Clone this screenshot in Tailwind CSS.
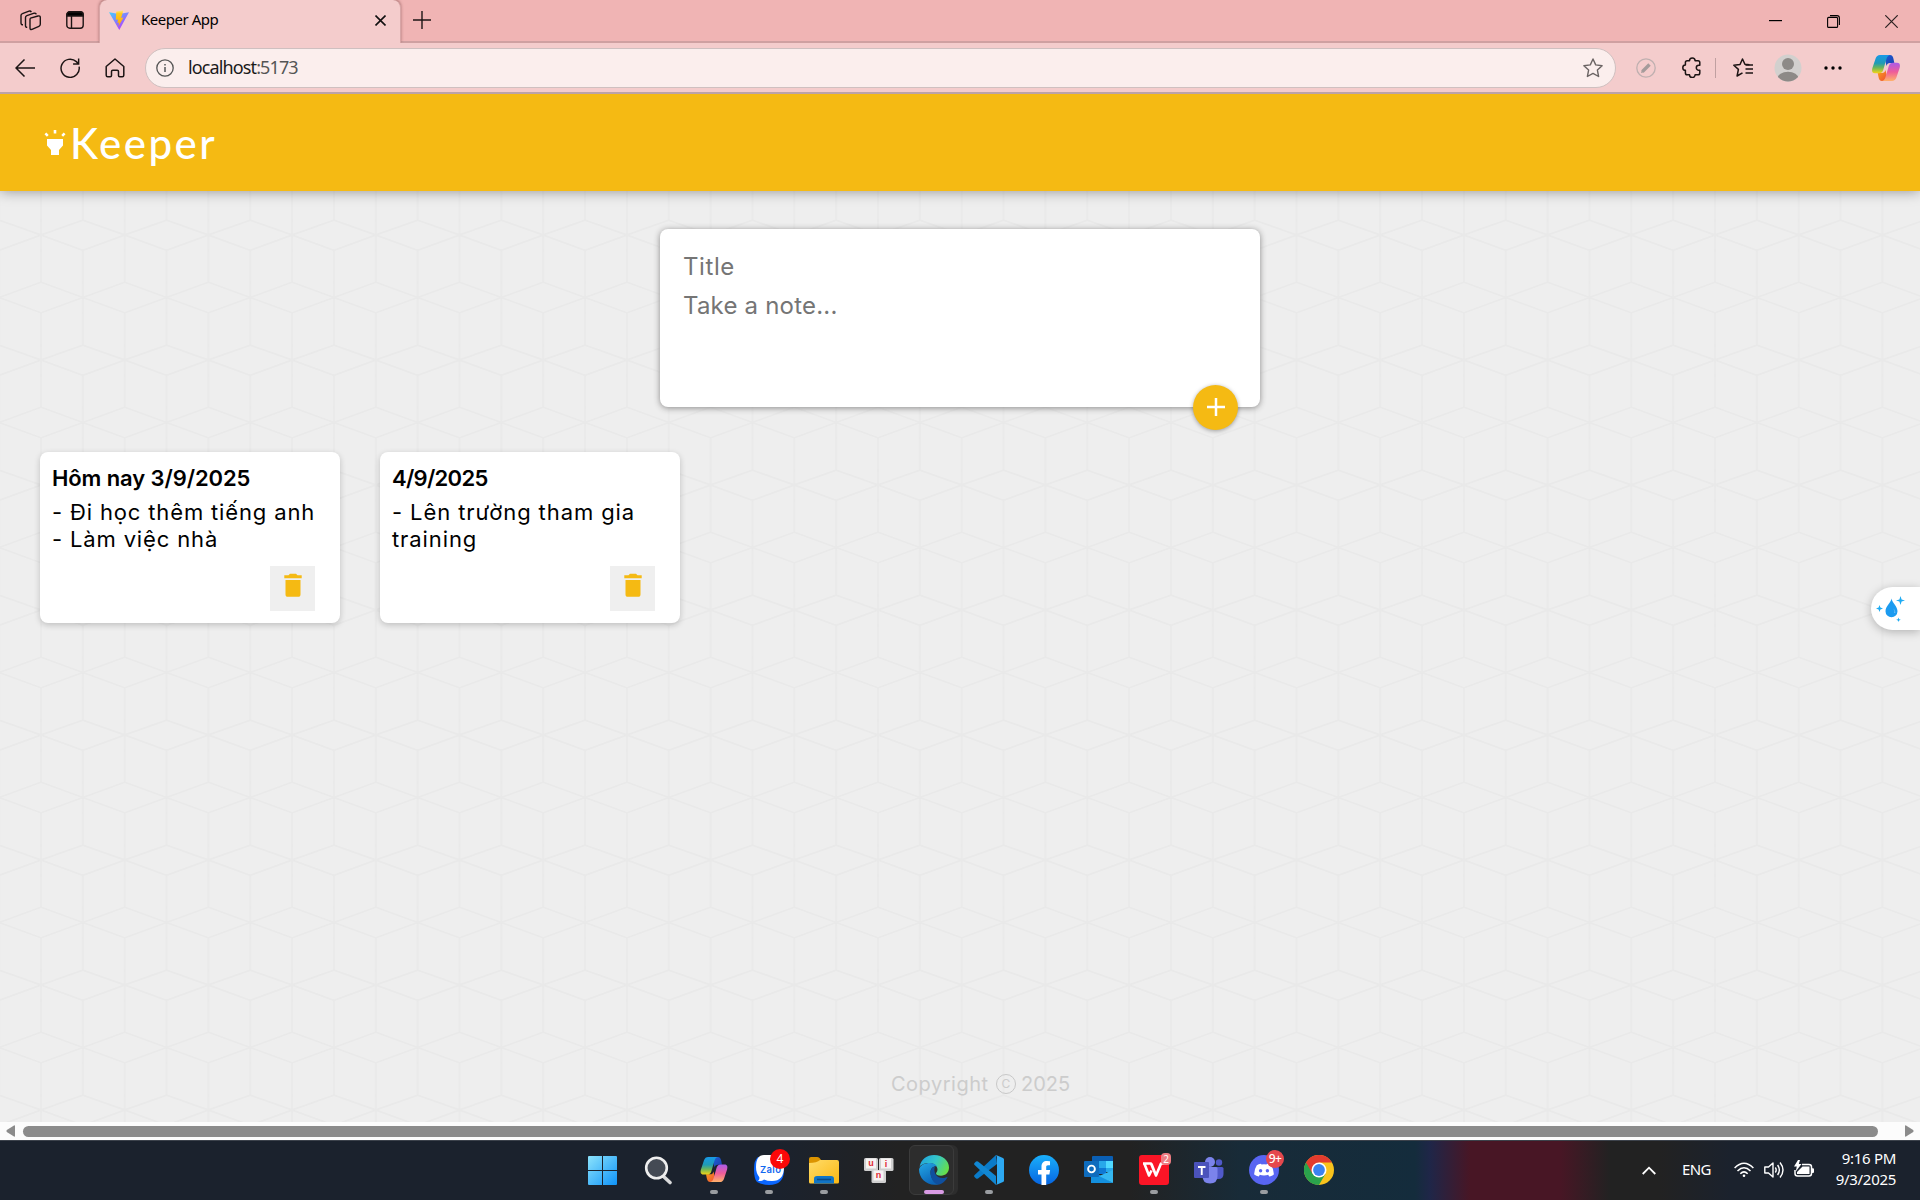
<!DOCTYPE html>
<html lang="en">
<head>
<meta charset="utf-8">
<title>Keeper App</title>
<script src="https://cdn.jsdelivr.net/npm/@tailwindcss/browser@4"></script>
</head>
<body class="w-[1920px] h-[1200px] overflow-hidden flex flex-col font-['Noto_Sans',sans-serif] text-black">

<svg width="0" height="0" class="absolute">
  <defs>
    <linearGradient id="cpA" x1="0" y1="0" x2="0" y2="1"><stop offset="0" stop-color="#1899e8"/><stop offset=".45" stop-color="#1f9bb5"/><stop offset=".7" stop-color="#6cb65a"/><stop offset="1" stop-color="#f3d416"/></linearGradient>
    <linearGradient id="cpB" x1="0" y1="0" x2="0" y2="1"><stop offset="0" stop-color="#ab5be8"/><stop offset=".5" stop-color="#ef5c9a"/><stop offset="1" stop-color="#ffb26a"/></linearGradient>
    <linearGradient id="cpC" x1="0" y1="0" x2="1" y2="1"><stop offset="0" stop-color="#1d5fd6"/><stop offset="1" stop-color="#1b3fae"/></linearGradient>
    <linearGradient id="cpD" x1="0" y1="0" x2="1" y2="1"><stop offset="0" stop-color="#f9a11b"/><stop offset="1" stop-color="#ee4a35"/></linearGradient>
    <symbol id="copilot" viewBox="0 0 28 26">
      <path fill="url(#cpC)" d="M12 0h6c2 0 3 1.500 3.500 4l.8 4H18c-2 0-3 1-3.500 3z"/>
      <path fill="url(#cpD)" d="M16 26h-6c-2 0-3-1.500-3.500-4l-.8-4H10c2 0 3-1 3.500-3z"/>
      <path fill="url(#cpA)" d="M8 0h10c-2 .3-3 2-3.700 4.500L11.200 15c-.8 2.300-2 3.200-4.200 3.200H3c-3 0-3.400-2.500-2.600-5.200L3.600 3.500C4.400 1.200 5.800 0 8 0z"/>
      <path fill="url(#cpB)" d="M20 26H10c2-.3 3-2 3.700-4.500L16.800 11c.8-2.300 2-3.200 4.200-3.200h4c3 0 3.400 2.500 2.600 5.200l-3.200 9.500c-.8 2.300-2.200 3.500-4.400 3.500z"/>
    </symbol>
    <symbol id="trash" viewBox="0 0 18 24"><path fill="#f5ba13" d="M1.500 7h15v14.500c0 1.400-.9 2.300-2.200 2.300H3.700c-1.300 0-2.200-.9-2.200-2.300zM.3 2.200h4.200L6 .7h6l1.500 1.500h4.200v3H.3z"/></symbol>
  </defs>
</svg>

<!-- Tab strip -->
<div class="h-[43px] shrink-0 flex bg-[#f0b4b4] border-b-2 border-[#cfa0a1]">
  <div class="w-[99px] h-[43px] pt-[10px] pl-5 flex items-start gap-[25px]">
    <svg width="21" height="21" viewBox="0 0 21 21" fill="none" stroke="#1c1414" stroke-width="1.400" stroke-linejoin="round"><path d="M10.500 8.200 18 6q2.300-.5 2.300 1.500v6.800q0 1.400-1.400 2L12 19.400q-2 .6-2-1.400V9.800q0-1.200.5-1.600z"/><path d="M7.200 17.300q-1.700.2-1.700-1.600V7.500q0-1.300 1.400-1.800l7.300-2.500q1.600-.4 2 1.200"/><path d="M3 14.800q-2 0-2-1.700V5.500q0-1.400 1.400-1.800L9 1.200q1.600-.5 2.300.9"/></svg>
    <svg class="mt-[1px]" width="18" height="18" viewBox="0 0 18 18" fill="none" stroke="#1c1414" stroke-width="1.400"><rect x=".8" y=".8" width="16.400" height="16.400" rx="3"/><path d="M5.500 5v12"/><path d="M1 5V3.500Q1 1 3.500 1h11Q17 1 17 3.500V5z" fill="#000"/></svg>
  </div>
  <div class="w-[302px] h-[43px] bg-[#f4cccc] rounded-t-lg flex items-start pl-[9px] border-x border-[#d8a5a6] shadow-[0_-1px_3px_rgba(90,40,40,0.5)] [clip-path:inset(0_-4px_0_-4px)]">
    <svg class="mt-[10px]" width="20" height="20" viewBox="0 0 20 20"><defs><linearGradient id="v1" x1="0" y1="0" x2=".7" y2="1"><stop offset="0" stop-color="#41d1ff"/><stop offset="1" stop-color="#bd34fe"/></linearGradient><linearGradient id="v2" x1="0" y1="0" x2="0" y2="1"><stop offset="0" stop-color="#ffea83"/><stop offset=".2" stop-color="#ffcb20"/><stop offset="1" stop-color="#ffa800"/></linearGradient></defs><path fill="url(#v1)" d="M0 2.200 10 4l10-1.800L10.300 20z"/><path fill="url(#v2)" d="m14.300.2-7 1.400-.5 8.200 2.300-.3-.7 3.500 1.800-.5-1 4.200 5.300-9.200-2.400.4 1.400-4.500z"/></svg>
    <span class="ml-[12px] mt-[8px] text-[15px] leading-[22px] tracking-[-0.480px] whitespace-nowrap w-[150px]">Keeper App</span>
    <svg class="ml-[84px] mt-[15px]" width="11" height="11" viewBox="0 0 11 11" stroke="#111" stroke-width="1.600"><path d="m.5.5 10 10m0-10-10 10"/></svg>
  </div>
  <svg class="ml-[12px] mt-[11px]" width="18" height="18" viewBox="0 0 18 18" stroke="#1c1414" stroke-width="1.400"><path d="M9 0v18M0 9h18"/></svg>
  <div class="ml-auto flex items-start pt-[15px] pr-[22px] gap-[45px]">
    <svg width="13" height="13" viewBox="0 0 13 13"><path d="M0 5h13v1.200H0z"/></svg>
    <svg width="13" height="13" viewBox="0 0 13 13" fill="none" stroke="#000" stroke-width="1.100"><rect x=".6" y="2.400" width="10" height="10" rx="1"/><path d="M3 .6h7q2.400 0 2.400 2.400v7"/></svg>
    <svg width="13" height="13" viewBox="0 0 13 13" stroke="#2a2020" stroke-width="1.200"><path d="m.3.3 12.400 12.400m0-12.400L.3 12.700"/></svg>
  </div>
</div>

<!-- Toolbar -->
<div class="relative z-10 h-[51px] shrink-0 bg-[#f4cccc] border-b-2 border-[#bda3a6] flex items-center pl-[2px]">
  <div class="w-[45px] flex justify-center"><svg width="20" height="18" viewBox="0 0 20 18" fill="none" stroke="#1c1414" stroke-width="1.500"><path d="M20 9H1M9.500.5 1 9l8.500 8.500"/></svg></div>
  <div class="w-[45px] flex justify-center"><svg width="20" height="20" viewBox="0 0 22 22" fill="none" stroke="#1c1414" stroke-width="1.600"><path d="M21 9.500A10 10 0 1 1 18 4L20.500 6.500M20.500 .5v6.100h-6.100"/></svg></div>
  <div class="w-[45px] flex justify-center"><svg width="20" height="20" viewBox="0 0 20 20" fill="none" stroke="#1c1414" stroke-width="1.500" stroke-linejoin="round"><path d="M1.200 8.500 10 1l8.800 7.500v8.800q0 1.500-1.500 1.500h-2.600q-1.200 0-1.200-1.200v-4q0-1.300-1.300-1.300H7.800q-1.300 0-1.300 1.300v4q0 1.200-1.200 1.200H2.700q-1.500 0-1.500-1.500z"/></svg></div>
  <div class="ml-2 w-[1471px] h-10 rounded-full bg-[#fbeeed] border border-[#cfc0c0] flex items-center pl-[10px] pr-[12px]">
    <svg width="18" height="18" viewBox="0 0 18 18" fill="none" stroke="#555" stroke-width="1.300"><circle cx="9" cy="9" r="8.200"/><path d="M9 8v5M9 5v1.500" stroke-width="1.500"/></svg>
    <span class="ml-[14px] mb-[1px] text-[18px] leading-[26px] tracking-[-0.880px] text-[#1a1a1a] whitespace-nowrap">localhost<span class="text-[#555]">:5173</span></span>
    <svg class="ml-auto" width="20" height="20" viewBox="0 0 20 20" fill="none" stroke="#6b6464" stroke-width="1.400" stroke-linejoin="round"><path d="m10 1 2.700 5.900 6.400.8-4.700 4.400 1.200 6.400L10 15.400l-5.600 3.100 1.200-6.400L.9 7.700l6.400-.8z"/></svg>
  </div>
  <div class="ml-[6px] w-[47px] flex justify-center"><svg width="20" height="20" viewBox="0 0 20 20" fill="none"><circle cx="10" cy="10" r="9.200" stroke="#bfb0b0" stroke-width="1.300"/><path d="m6.500 13.500 7-7" stroke="#a59b9b" stroke-width="3.400"/><path d="m5 15 .8-3 2.200 2.200z" fill="#a59b9b"/></svg></div>
  <div class="w-[45px] flex justify-center"><svg width="19" height="21" viewBox="0 0 19 21" fill="none" stroke="#1c1414" stroke-width="1.500" stroke-linejoin="round"><path d="M7.500 3.700a2.800 2.800 0 0 1 5.600 0h2.900q1.800 0 1.800 1.800v2.700h-1a2.500 2.500 0 0 0 0 5h1V16q0 1.800-1.800 1.800h-2.900a2.800 2.800 0 0 1-5.600 0H5.200q-1.800 0-1.800-1.800v-2.700a2.600 2.600 0 0 1 0-5.200V5.500q0-1.800 1.800-1.800z"/></svg></div>
  <div class="ml-px w-px h-5 bg-[#c0a0a1]"></div>
  <div class="ml-[4px] w-[46px] flex justify-center"><svg width="21" height="20" viewBox="0 0 21 20" fill="none" stroke="#1c1414" stroke-width="1.500" stroke-linejoin="round"><path d="M16.500 6.800l-4.600-.5L9.500 1 7 6.500l-6.200.7 4.600 4.200L4.100 18l5.400-3.100"/><path d="M12.500 7H20M12.500 11H20M12.500 15H20"/></svg></div>
  <div class="w-[44px] flex justify-center"><svg width="28" height="28" viewBox="0 0 28 28"><defs><clipPath id="av"><circle cx="14" cy="14" r="13.500"/></clipPath></defs><circle cx="14" cy="14" r="13.500" fill="#d2d0ce"/><g clip-path="url(#av)" fill="#8d8a87"><circle cx="14" cy="10" r="6"/><ellipse cx="14" cy="24.500" rx="10.500" ry="6.800"/></g></svg></div>
  <div class="w-[45px] flex justify-center"><svg width="18" height="4" viewBox="0 0 18 4"><circle cx="2" cy="2" r="1.700"/><circle cx="9" cy="2" r="1.700"/><circle cx="16" cy="2" r="1.700"/></svg></div>
  <div class="ml-[17px] w-[28px]"><svg width="28" height="26"><use href="#copilot"/></svg></div>
</div>

<!-- App -->
<div class="relative h-[1028px] shrink-0 bg-[#eee] flex flex-col font-['Inter',sans-serif]">
  <svg class="absolute inset-0" width="1920" height="1028"><defs><pattern id="cubes" x="41" y="141" width="83.700" height="125" patternUnits="userSpaceOnUse"><path fill="none" stroke="#e9e9e9" stroke-width="1.700" d="M0 125 41.850 110.200 83.700 125M0 0 41.850 15.300 83.700 0M0 47.200 41.850 62.500 0 77.800M83.700 47.200 41.850 62.500 83.700 77.800M0 0v47.200M0 77.800V125M83.700 0v47.200M83.700 77.800V125M41.850 15.300v95"/></pattern></defs><rect width="1920" height="1028" fill="url(#cubes)"/></svg>

  <header class="relative h-[97px] shrink-0 bg-[#f5ba13] shadow-[0_0_13px_rgba(0,0,0,0.4)] flex items-start pl-11">
    <svg class="mt-[35px]" width="22" height="27" viewBox="0 0 22 27" fill="#fff"><path d="M3 10h16v6.500l-4 4.500v5H7v-5l-4-4.500zM9.700 1h2.600v3.500H9.700zM.5 5.300l1.800-1.800 2.400 2.400-1.800 1.800zM21.500 5.300l-1.800-1.800-2.400 2.400 1.800 1.800z"/></svg>
    <h1 class="ml-[4px] mt-[24px] text-[42px] leading-[50px] tracking-[2.500px] font-medium text-white font-['Lato',sans-serif]">Keeper</h1>
  </header>

  <main class="relative grow">
    <form class="relative mx-auto mt-[38px] w-[600px] h-[178px] rounded-lg bg-white shadow-[0_1px_6px_rgb(138,137,137)] pl-[23px] pt-[21px] text-[24px] leading-[34px] text-[#757575]">
      <div class="tracking-[0.600px]">Title</div>
      <div class="mt-[5px] tracking-[0.200px]">Take a note...</div>
      <div class="absolute right-[22px] -bottom-[23px] size-[45px] rounded-full bg-[#f5ba13] shadow-[0_1px_4px_rgba(0,0,0,0.35)] flex items-center justify-center pb-px"><svg width="18" height="18" viewBox="0 0 18 18"><path stroke="#fff" stroke-width="2.500" d="M9 0v18M0 9h18"/></svg></div>
    </form>
    <div class="mt-[45px] ml-10 flex gap-10 text-[22px] leading-[27px]">
      <article class="w-[300px] h-[171px] rounded-lg bg-white shadow-[0_2px_6px_rgba(0,0,0,0.2)] px-[12px] pt-[13px]">
        <h2 class="font-semibold tracking-[-0.100px] whitespace-nowrap">Hôm nay 3/9/2025</h2>
        <p class="mt-[7px] tracking-[0.850px] whitespace-nowrap">- Đi học thêm tiếng anh<br>- Làm việc nhà</p>
        <div class="mt-[13px] ml-[218px] size-[45px] bg-[#efefef] flex justify-center pt-[7px]"><svg width="18" height="24"><use href="#trash"/></svg></div>
      </article>
      <article class="w-[300px] h-[171px] rounded-lg bg-white shadow-[0_2px_6px_rgba(0,0,0,0.2)] px-[12px] pt-[13px]">
        <h2 class="font-semibold tracking-[-0.700px] whitespace-nowrap">4/9/2025</h2>
        <p class="mt-[7px] tracking-[0.900px] whitespace-nowrap">- Lên trường tham gia<br>training</p>
        <div class="mt-[13px] ml-[218px] size-[45px] bg-[#efefef] flex justify-center pt-[7px]"><svg width="18" height="24"><use href="#trash"/></svg></div>
      </article>
    </div>
  </main>

  <footer class="relative h-[52px] shrink-0 pl-[891px] flex items-start gap-[6px] text-[20px] leading-[28px] text-[#ccc]">
    <span class="w-[99px] tracking-[0.500px]">Copyright</span>
    <span class="mt-[4px] size-5 rounded-full border border-[#c8c8c8] flex items-center justify-center text-[12px] leading-none">C</span>
    <span class="-ml-px">2025</span>
  </footer>

  <div class="absolute right-0 top-[493px] w-[49px] h-[43px] rounded-l-full bg-white shadow-[0_2px_10px_rgba(0,0,0,0.25)] flex items-center pl-[5px]">
    <svg width="31" height="28" viewBox="0 0 31 28"><path fill="#1c9bf0" d="M15.500 3.500c.5 4 6 7.500 6 12.800a6 6 0 0 1-12 0c0-5 5.200-8 6-12.800z"/><path fill="#9bd6fb" d="M17.200 13.500a4 4 0 0 1 1 4.500l1.200-.6a5 5 0 0 0-2.200-3.900z"/><path fill="#1eabf3" d="m24.500 1 1.100 3.400L29 5.500l-3.400 1.100-1.100 3.400-1.100-3.400L20 5.500l3.400-1.100zM3.500 10l.9 2.600 2.600.9-2.600.9-.9 2.600-.9-2.600L0 13.500l2.600-.9zM22.500 22.500l.6 1.700 1.700.6-1.700.6-.6 1.700-.6-1.700-1.700-.6 1.700-.6z"/></svg>
  </div>
</div>

<!-- Horizontal scrollbar -->
<div class="h-[18px] shrink-0 bg-[#fcfcfc] flex items-center pl-[6px]">
  <svg width="9" height="12" viewBox="0 0 9 12"><path fill="#8b8b8b" d="M9 1v10q0 1-1 .6L.8 7Q0 6 .8 5L8 .4Q9 0 9 1z"/></svg>
  <div class="ml-[8px] w-[1855px] h-[11px] rounded-full bg-[#8b8b8b]"></div>
  <svg class="ml-[27px]" width="9" height="12" viewBox="0 0 9 12"><path fill="#8b8b8b" d="M0 1v10q0 1 1 .6L8.200 7Q9 6 8.200 5L1 .4Q0 0 0 1z"/></svg>
</div>

<!-- Taskbar -->
<div class="h-[60px] shrink-0 border-t border-[#3c424b] flex bg-[linear-gradient(90deg,#1b222d_0,#1b222d_780px,#222222_900px,#222222_1130px,#182b38_1240px,#142c3c_1415px,#1f2648_1430px,#481625_1470px,#481625_1560px,#222222_1610px,#222222_1660px,#1b222d_1730px)]">
  <div class="pl-[575px] flex">
    <div class="w-[55px] flex flex-col items-center pt-[15px]"><svg width="29" height="29" viewBox="0 0 29 29"><defs><linearGradient id="wn" x1="0" y1="0" x2="1" y2="1"><stop offset="0" stop-color="#8ce3fb"/><stop offset="1" stop-color="#0f93f8"/></linearGradient></defs><path fill="url(#wn)" d="M0 1q0-1 1-1h13v14H0zM15 0h13q1 0 1 1v13H15zM0 15h14v14H1q-1 0-1-1zM15 15h14v13q0 1-1 1H15z"/></svg></div>
    <div class="w-[55px] flex flex-col items-center pt-[15px]"><svg width="28" height="29" viewBox="0 0 28 29" fill="#444a54"><path d="m19 20 7 6.500" stroke="#d9dadb" stroke-width="3.600" stroke-linecap="round"/><circle cx="12.500" cy="12" r="10.300" stroke="#eee" stroke-width="2.600"/></svg></div>
    <div class="w-[55px] flex flex-col items-center pt-[16px] pl-[2px]"><svg width="28" height="25"><use href="#copilot"/></svg><i class="mt-[8px] w-2 h-1 rounded-full bg-[#9a9da1]"></i></div>
    <div class="relative w-[55px] flex flex-col items-center pt-[14px] pl-[2px]"><svg width="30" height="30" viewBox="0 0 30 30"><path fill="#0a66ff" d="M4 2h22q4 3 4 13 0 15-15 15Q8 30 3 27 0 24 0 14 0 5 4 2z"/><path fill="#fff" d="M10 0h8q12 0 12 12 0 14-12 14-5 0-8-1.500-2 2-6 1.500 2-2 1.200-4Q2 18 2 12 2 0 10 0z"/><text x="6" y="17.500" font-family="Inter,sans-serif" font-size="9.500" font-weight="600" fill="#1268f0" textLength="21">Zalo</text></svg><i class="mt-[5px] w-2 h-1 rounded-full bg-[#9a9da1]"></i><span class="absolute left-[30px] top-[8px] size-5 rounded-full bg-[#fb0808] text-white text-[12px] leading-5 text-center font-['Noto_Sans',sans-serif]">4</span></div>
    <div class="w-[55px] flex flex-col items-center pt-[16px] pl-[2px]"><svg width="30" height="27" viewBox="0 0 30 27"><defs><linearGradient id="fd" x1="0" y1="0" x2="1" y2="1"><stop offset="0" stop-color="#ffdc69"/><stop offset="1" stop-color="#fbb813"/></linearGradient></defs><path fill="#dc9400" d="M0 2q0-2 2-2h6q1.500 0 2.500 1L12 3v5H0z"/><path fill="url(#fd)" d="M0 6q8 0 11-3h17q2 0 2 2v20q0 1.500-1.500 1.500h-27Q0 26.500 0 25z"/><path fill="#1175c6" d="M5 26.500v-4.700Q5 19 8 19h14q3 0 3 2.800v4.700z"/><path stroke="#0a4a86" stroke-width="1.600" d="M8 22.500h14"/></svg><i class="mt-[6px] w-2 h-1 rounded-full bg-[#9a9da1]"></i></div>
    <div class="w-[55px] flex flex-col items-center pt-[17px] pl-[2px]"><svg width="30" height="25" viewBox="0 0 30 25" font-family="Liberation Sans,sans-serif" font-weight="700" font-size="9" fill="#e02b35" text-anchor="middle"><g fill="#cfcfcf"><rect width="14" height="13" rx="1.500"/><rect x="15" width="14.500" height="13" rx="1.500"/><rect x="7.500" y="12" width="14.500" height="13" rx="1.500"/></g><g fill="#f6f3f3"><rect x="2" y=".5" width="10" height="10"/><rect x="17" y=".5" width="10" height="10"/><rect x="9.500" y="12.500" width="10" height="10"/></g><text x="7" y="8">u</text><text x="22" y="9">i</text><text x="14.500" y="20">n</text></svg></div>
    <div class="w-[55px] pt-[4px] pl-[4px] flex">
      <div class="w-[45px] h-[50px] shrink-0 rounded-md bg-[#2d2d2d] border border-[#3b3b3b] shadow-[4px_0_0_#2d2d2d] flex flex-col items-center pt-[9px] pl-[4px]"><svg width="30" height="30" viewBox="0 0 30 30"><defs><linearGradient id="e1" x1="0" y1=".2" x2="1" y2=".6"><stop offset="0" stop-color="#1fa3e0"/><stop offset=".5" stop-color="#35c6c7"/><stop offset="1" stop-color="#67df48"/></linearGradient><linearGradient id="e2" x1="0" y1="0" x2=".5" y2="1"><stop offset="0" stop-color="#23a7e5"/><stop offset="1" stop-color="#0c65b8"/></linearGradient></defs><path fill="url(#e1)" d="M.5 12C2 4 8 0 15 0c9 0 15 6 15 12.500 0 5-3.500 8.200-8 8.200-3.500 0-5-1.200-5-2.500 0-.8 1.500-1.500 1.500-3.800C18.500 11 15 8 11 8 6 8 2 9.500.5 12z"/><path fill="url(#e2)" d="M0 14.500C1 10 6 8 11 8c3.500 0 6 1.500 7 3.500-3-.8-6.500 1.500-6.500 6C11.500 24 17 29 20 29.200 9 32 0 24 0 14.500z"/><path fill="#0f4f9e" d="M11.500 17.500c0-3.500 2-5.500 4.500-6-2 5 1 11.500 7.500 11.500 2.500 0 4-.8 5.200-1.300C27 26 22.500 29.500 19 29.500c-4-.5-7.500-6-7.500-12z"/></svg><i class="mt-[5px] w-5 h-1 rounded-full bg-[#d99be4]"></i></div>
    </div>
    <div class="w-[55px] flex flex-col items-center pt-[14px] pl-[2px]"><svg width="30" height="30" viewBox="0 0 30 30"><path fill="#0a7bc9" d="m22 0 1 9L4 23.500q-1 .6-2 0L.5 22Q-.3 21 .6 20z"/><path fill="#1187d3" d="M22 30V21L4 6.500q-1-.6-2 0L.5 8Q-.3 9 .6 10z"/><path fill="#2da9f2" d="m22 0 7 3q1 .6 1 1.500v21q0 1-1 1.500l-7 3q1-1 1-2.500v-25Q23 1 22 0z"/></svg><i class="mt-[5px] w-2 h-1 rounded-full bg-[#9a9da1]"></i></div>
    <div class="w-[55px] flex flex-col items-center pt-[14px] pl-[2px]"><svg width="30" height="30" viewBox="0 0 30 30"><defs><linearGradient id="fb" x1="0" y1="0" x2="0" y2="1"><stop offset="0" stop-color="#1aaffb"/><stop offset="1" stop-color="#0664e1"/></linearGradient></defs><circle cx="15" cy="15" r="15" fill="url(#fb)"/><path fill="#fff" d="M12.500 30V19.500H9V15h3.500v-3.500C12.500 8 14.500 6 18 6l3 .3v4h-2c-1.400 0-1.800.8-1.800 1.800V15h3.900l-.7 4.500h-3.200V30z"/></svg></div>
    <div class="w-[55px] flex flex-col items-center pt-[15px] pl-[2px]"><svg width="30" height="28" viewBox="0 0 30 28"><path fill="#0a5fb4" d="M8 1q0-1 1-1h19q1 0 1 1v14H8z"/><path fill="#28a8ea" d="M15 5h7v7h-7z"/><path fill="#50d9ff" d="M22 5h7v7h-7z"/><path fill="#0f78d4" d="M15 12h7v6h-7z"/><path fill="#28a8ea" d="M22 12h7v4h-7z"/><path fill="#1490df" d="M7 27V14l22 13z"/><path fill="#35b8f1" d="M29 14v13L15 20z"/><rect y="5" width="15" height="16" rx="1" fill="#0f6cbd"/><circle cx="7.500" cy="13" r="3.400" fill="none" stroke="#fff" stroke-width="1.900"/></svg></div>
    <div class="relative w-[55px] flex flex-col items-center pt-[14px] pl-[2px]"><svg width="30" height="30" viewBox="0 0 30 30"><rect width="30" height="30" rx="3" fill="#fb1526"/><path fill="none" stroke="#fff" stroke-width="2.600" stroke-linejoin="round" d="M4 8.500h8l5 12 5-12h3.500M5.500 9 10 20.500l2.500-5M17 20.500 12.500 9"/></svg><i class="mt-[5px] w-2 h-1 rounded-full bg-[#9a9da1]"></i><span class="absolute left-[36px] top-[12px] w-[10px] h-[12px] rounded-sm bg-[#ee7d83] text-white text-[10px] leading-[12px] text-center">2</span></div>
    <div class="w-[55px] flex flex-col items-center pt-[16px] pl-[2px]"><svg width="30" height="27" viewBox="0 0 30 27"><circle cx="16" cy="5" r="5" fill="#7b83eb"/><circle cx="25" cy="5.500" r="3.200" fill="#5059c9"/><path fill="#5059c9" d="M20 10h8q1.500 0 1.500 1.500V17q0 5-5 5H20z"/><path fill="#7b83eb" d="M9 10h13q1.500 0 1.500 1.500V19q0 7.500-7.500 7.500T8.500 19z"/><rect y="5" width="15" height="16" rx="1" fill="#4b53bc"/><path fill="#fff" d="M4 9h7.500v1.900H8.700V18H6.800v-7.100H4z"/></svg></div>
    <div class="relative w-[55px] flex flex-col items-center pt-[14px] pl-[2px]"><svg width="30" height="30" viewBox="0 0 30 30"><circle cx="15" cy="15" r="15" fill="#5865f2"/><path fill="#fff" d="M12.500 9.500 12 8.700Q9.500 9 7.800 10.200 5 14.500 5.200 19.500q2 1.600 4.600 2l1-1.700q2 .7 4.200.7t4.200-.7l1 1.700q2.600-.4 4.600-2 .2-5-2.600-9.300Q20.500 9 18 8.700l-.5.8q-2.500-.3-5 0z"/><circle cx="11.600" cy="15.700" r="1.700" fill="#5865f2"/><circle cx="18.400" cy="15.700" r="1.700" fill="#5865f2"/></svg><i class="mt-[5px] w-2 h-1 rounded-full bg-[#9a9da1]"></i><span class="absolute left-[31px] top-[9px] size-[18px] rounded-full bg-[#e5484d] text-white text-[12px] leading-[17px] text-center tracking-[-0.500px] font-medium">9+</span></div>
    <div class="w-[55px] flex flex-col items-center pt-[14px] pl-[2px]"><svg width="30" height="30" viewBox="0 0 30 30"><circle cx="15" cy="15" r="15" fill="#f9c31c"/><path fill="#2aa24c" d="M2 7.500A15 15 0 0 0 15 30l6.500-11.200L15 15z"/><path fill="#e33b2e" d="M2 7.500A15 15 0 0 1 28 7.500H15v7.500L8.500 18.800z"/><circle cx="15" cy="15" r="7.500" fill="#fff"/><circle cx="15" cy="15" r="5.900" fill="#3b82f0"/></svg></div>
  </div>
  <div class="ml-auto pr-6 flex items-start text-white text-[15px] leading-[20px]">
    <svg class="mt-[25px]" width="14" height="9" viewBox="0 0 14 9" fill="none" stroke="#fff" stroke-width="1.800"><path d="m.7 8 6.300-6.300L13.300 8"/></svg>
    <span class="ml-[26px] mt-[18px] w-[52px] tracking-[-0.600px]">ENG</span>
    <svg class="mt-[21px]" width="20" height="16" viewBox="0 0 20 16" fill="none" stroke="#fff" stroke-width="1.500"><path d="M.6 6q9.400-9.500 18.800 0M3.500 9q6.500-6.500 13 0M6.300 11.700q3.700-3.700 7.400 0"/><circle cx="10" cy="13.800" r="1.300" fill="#fff" stroke="none"/></svg>
    <svg class="ml-[10px] mt-[20px]" width="20" height="18" viewBox="0 0 20 18" fill="none" stroke="#fff" stroke-width="1.400" stroke-linejoin="round"><path d="M.8 6h3.700L9 2v14l-4.500-4H.8zM11.300 6.500q1.800 2.500 0 5M13.600 4q3.500 5 0 10M16 1.500q6 7.500 0 15"/></svg>
    <svg class="ml-[10px] mt-[19px]" width="20" height="18" viewBox="0 0 20 18"><path fill="none" stroke="#fff" stroke-width="1.500" d="M8 4.500h7q2.500 0 2.500 2.500v6.500q0 2.500-2.500 2.500H3.500Q1 16 1 13.500V10"/><path fill="#fff" d="M8.500 6.500H15.500v7.500H3V12zM18 8.300h1q1 0 1 1V12q0 1-1 1h-1z"/><path fill="#fff" d="M4 0 0 6.500h2.800L1.800 11.500 7.500 4H4.800L6 0z"/></svg>
    <div class="w-[82px] mt-[7px] text-right leading-[20.500px] tracking-[-0.300px] whitespace-nowrap">9:16 PM<br>9/3/2025</div>
  </div>
</div>
</body>
</html>
